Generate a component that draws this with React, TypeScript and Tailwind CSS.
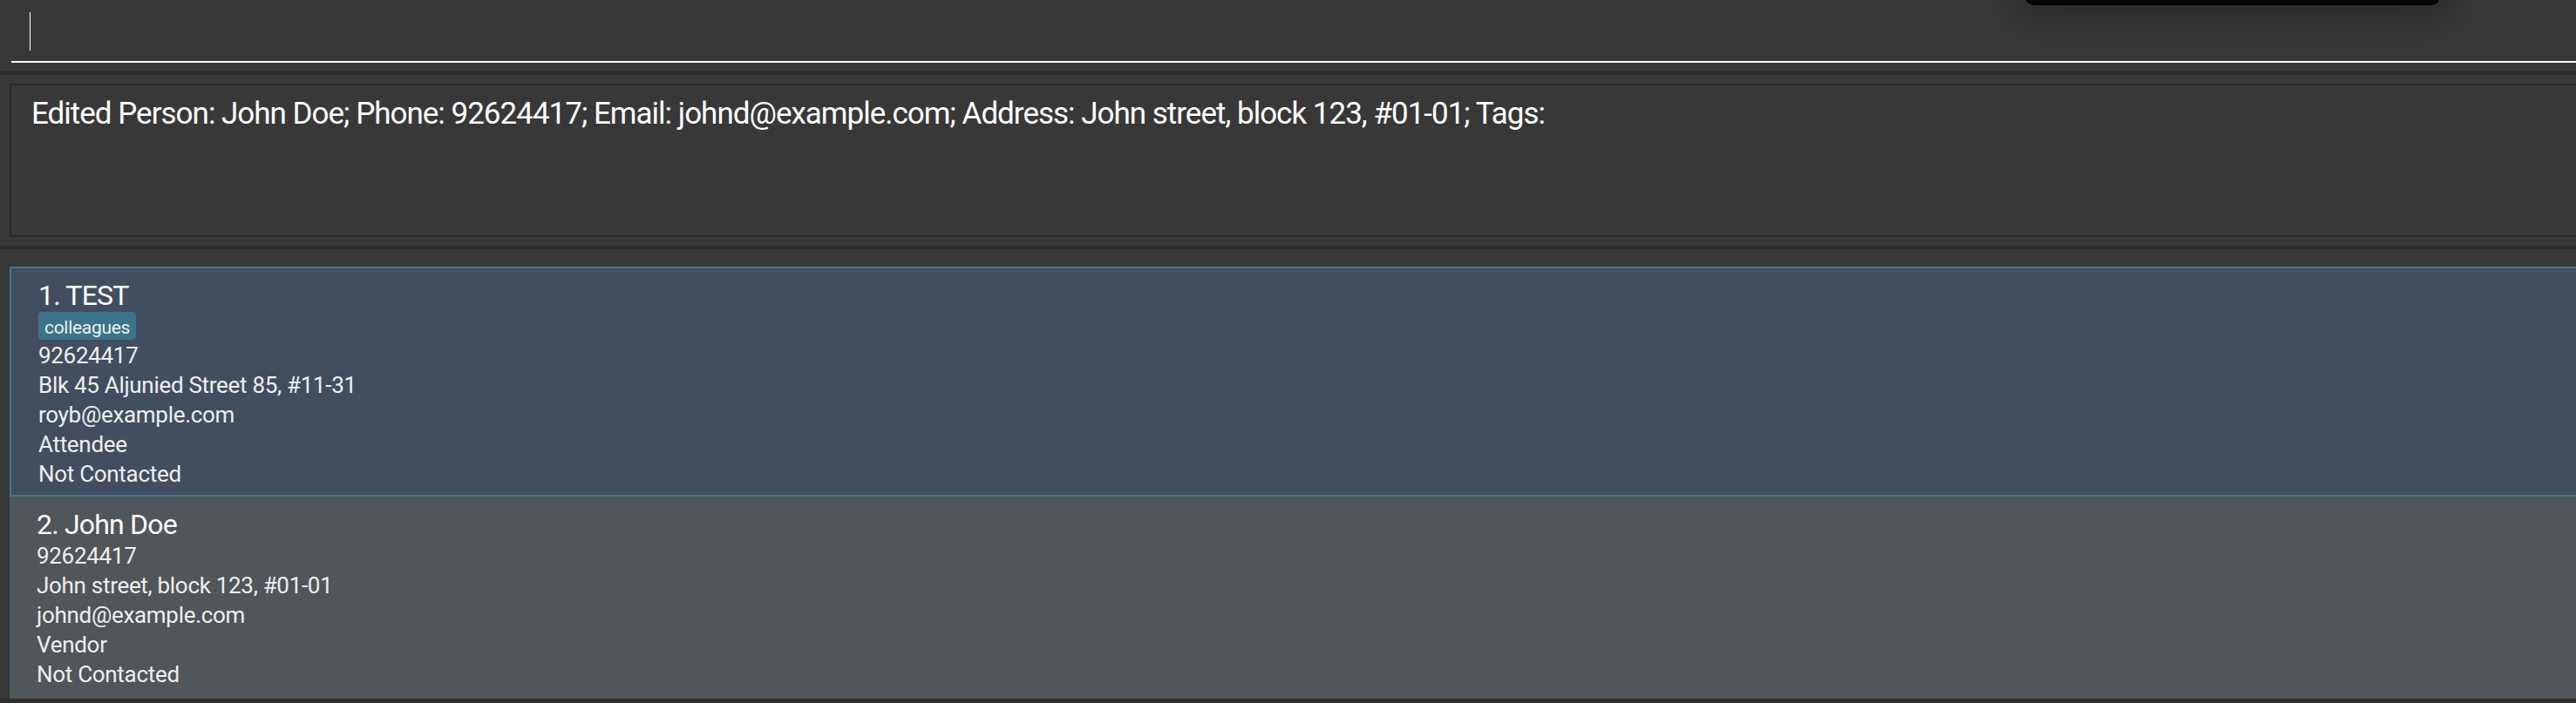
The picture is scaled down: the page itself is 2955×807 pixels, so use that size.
const persons = [
  {
    name: "TEST",
    tags: ["colleagues"],
    phone: "92624417",
    address: "Blk 45 Aljunied Street 85, #11-31",
    email: "royb@example.com",
    role: "Attendee",
    status: "Not Contacted",
  },
  {
    name: "John Doe",
    tags: [],
    phone: "92624417",
    address: "John street, block 123, #01-01",
    email: "johnd@example.com",
    role: "Vendor",
    status: "Not Contacted",
  },
];

type Person = (typeof persons)[number];

function PersonCard({ person, index, selected }: { person: Person; index: number; selected: boolean }) {
  return (
    <div
      className={
        selected
          ? "h-[264px] border-2 border-r-0 border-[#3e7a8e] bg-[#424e5f] pl-[31px] pt-[12px]"
          : "h-[232px] bg-[#51565a] pl-[31px] pt-[13px]"
      }
    >
      <div className="text-[32px] leading-[38px] tracking-[-0.8px] text-white">
        {index}. {person.name}
      </div>
      {person.tags.length > 0 && (
        <div className="flex gap-2">
          {person.tags.map((tag) => (
            <span
              key={tag}
              className="rounded-[4px] bg-[#3c7489] px-[7px] pt-[4px] text-[21px] leading-[28px] tracking-[-0.3px] text-[#ececec]"
            >
              {tag}
            </span>
          ))}
        </div>
      )}
      <div
        className={
          selected
            ? "mt-[1px] text-[26px] leading-[34px] tracking-[-0.3px] text-[#eeeeee]"
            : "text-[26px] leading-[34px] tracking-[-0.3px] text-[#eeeeee]"
        }
      >
        <div>{person.phone}</div>
        <div>{person.address}</div>
        <div>{person.email}</div>
        <div>{person.role}</div>
        <div>{person.status}</div>
      </div>
    </div>
  );
}

export default function App() {
  return (
    <div className="relative h-[807px] w-full overflow-hidden bg-[#383838] font-['Roboto',sans-serif]">
      {/* popup peeking from above */}
      <div className="absolute left-[2323px] top-[-40px] h-[46px] w-[476px] rounded-[10px] bg-[#050505] shadow-[0_0_40px_16px_rgba(0,0,0,0.25)]" />

      <div className="h-[70px] pl-[34px] pt-[14px]">
        <div className="h-[44px] w-px bg-white" />
      </div>
      <div className="ml-[13px] h-[2px] bg-white" />

      <div className="mt-[10px] h-[4px] bg-[#2b2b2b]" />

      <div className="mr-[-20px] ml-[11px] mt-[10px] h-[176px] border-2 border-r-0 border-[#2a2a2a] pl-[23px] pt-[12px]">
        <p className="whitespace-nowrap text-[35px] leading-[41px] tracking-[-1px] text-white">
          Edited Person: John Doe; Phone: 92624417; Email: johnd@example.com; Address: John street, block 123, #01-01; Tags:
        </p>
      </div>

      <div className="mt-[10px] h-[4px] bg-[#2b2b2b]" />

      <div className="ml-[11px] mr-[-20px] mt-[20px]">
        {persons.map((p, i) => (
          <PersonCard key={p.name} person={p} index={i + 1} selected={i === 0} />
        ))}
      </div>
      <div className="h-[5px] bg-[#303030]" />
    </div>
  );
}
